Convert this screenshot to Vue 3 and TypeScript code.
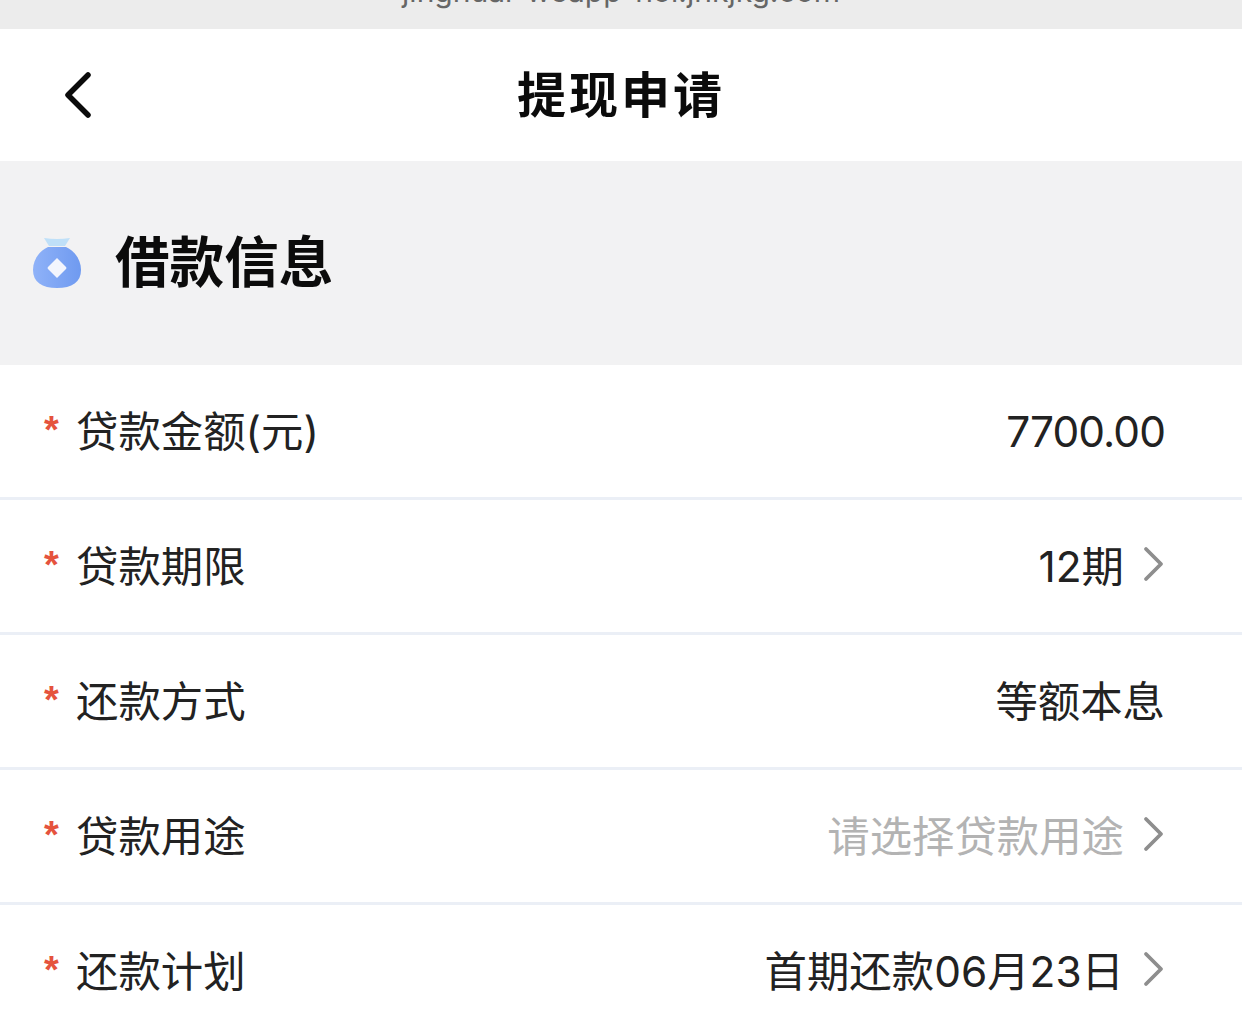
<template>
  <div class="page">
    <div class="url-bar"><span class="url-text">jinghuai-weapp-hol.jnkjkg.com</span></div>

    <header class="nav">
      <svg class="back" width="34" height="50" viewBox="0 0 34 50">
        <path d="M28 5 L8 25 L28 45" fill="none" stroke="#0b0b0b" stroke-width="5.5" stroke-linecap="round" stroke-linejoin="round" />
      </svg>
      <h1 class="nav-title">提现申请</h1>
    </header>

    <section class="section-head">
      <svg class="bag" width="50" height="52" viewBox="0 0 50 52">
        <defs>
          <linearGradient id="bagFill" x1="0" y1="0" x2="1" y2="0">
            <stop offset="0" stop-color="#8fb2f8" />
            <stop offset="1" stop-color="#6f9af0" />
          </linearGradient>
        </defs>
        <path d="M12 1 Q25 3 38 1 L33 9 H17 Z" fill="#bfe0f8" />
        <path d="M16 10 H34 C43 14 49 23 49 33 C49 45 40 51 25 51 C10 51 1 45 1 33 C1 23 7 14 16 10 Z" fill="url(#bagFill)" />
        <path d="M25 21 L34 30 Q35 31 34 32 L25 41 L16 32 Q15 31 16 30 Z" fill="#f3f5fd" />
      </svg>
      <h2 class="section-title">借款信息</h2>
    </section>

    <div class="form">
      <div v-for="row in rows" :key="row.label" class="row">
        <div class="label"><span class="star">*</span><span class="label-text">{{ row.label }}</span></div>
        <div class="value" :class="{ placeholder: row.placeholder, amount: row.amount }">
          <span class="value-text">{{ row.value }}</span>
          <svg v-if="row.arrow" class="arrow" width="22" height="36" viewBox="0 0 22 36">
            <path d="M3 3 L18 18 L3 33" fill="none" stroke="#8e8e8e" stroke-width="3.8" stroke-linecap="round" stroke-linejoin="round" />
          </svg>
        </div>
      </div>
    </div>
  </div>
</template>

<script setup lang="ts">
interface Row {
  label: string;
  value: string;
  arrow?: boolean;
  placeholder?: boolean;
  amount?: boolean;
}

const rows: Row[] = [
  { label: '贷款金额(元)', value: '7700.00', amount: true },
  { label: '贷款期限', value: '12期', arrow: true },
  { label: '还款方式', value: '等额本息' },
  { label: '贷款用途', value: '请选择贷款用途', arrow: true, placeholder: true },
  { label: '还款计划', value: '首期还款06月23日', arrow: true },
];
</script>

<style>
html,
body {
  margin: 0;
  background: #ffffff;
  overflow: hidden;
}
</style>

<style scoped>
.page {
  width: 1242px;
  height: 1028px;
  overflow: hidden;
  background: #ffffff;
  font-family: "Noto Sans CJK SC", "Roboto", sans-serif;
  color: #222222;
}

.url-bar {
  height: 29px;
  background: #ececec;
  display: flex;
  justify-content: center;
  align-items: flex-end;
  overflow: hidden;
}

.url-text {
  font-family: "Inter", "Roboto", sans-serif;
  font-size: 30px;
  line-height: 36px;
  margin-bottom: 20px;
  color: #666666;
  white-space: nowrap;
}

.nav {
  position: relative;
  height: 132px;
  display: flex;
  align-items: center;
  justify-content: center;
  background: #ffffff;
}

.back {
  position: absolute;
  left: 60px;
  top: 41px;
}

.nav-title {
  margin: 0 0 6px;
  font-size: 49px;
  font-weight: 700;
  letter-spacing: 3px;
  line-height: 60px;
  color: #0b0b0b;
}

.section-head {
  height: 204px;
  display: flex;
  align-items: center;
  padding-left: 32px;
  gap: 33px;
  background: #f2f2f3;
}

.section-title {
  margin: 0 0 8px;
  font-size: 54.6px;
  font-weight: 700;
  line-height: 66px;
  color: #0b0b0b;
}

.row {
  height: 132px;
  border-bottom: 3px solid #ebeff6;
  display: flex;
  align-items: center;
  justify-content: space-between;
  padding: 0 77px 0 44px;
  font-size: 42.4px;
}

.label {
  display: flex;
  align-items: center;
}

.label-text {
  font-family: "Inter", "Noto Sans CJK SC", sans-serif;
  line-height: 52px;
  margin-top: 2px;
}

.star {
  width: 32px;
  color: #e5533d;
  font-family: "Liberation Sans", sans-serif;
  font-weight: 700;
  font-size: 38px;
  line-height: 1;
  margin-top: -2px;
}

.value {
  display: flex;
  align-items: center;
  gap: 19px;
  font-family: "Inter", "Noto Sans CJK SC", sans-serif;
}

.value-text {
  line-height: 52px;
  margin-top: 2px;
}

.amount {
  letter-spacing: -0.9px;
}

.arrow {
  margin-bottom: 5px;
}

.placeholder {
  color: #b3b3b3;
}
</style>
